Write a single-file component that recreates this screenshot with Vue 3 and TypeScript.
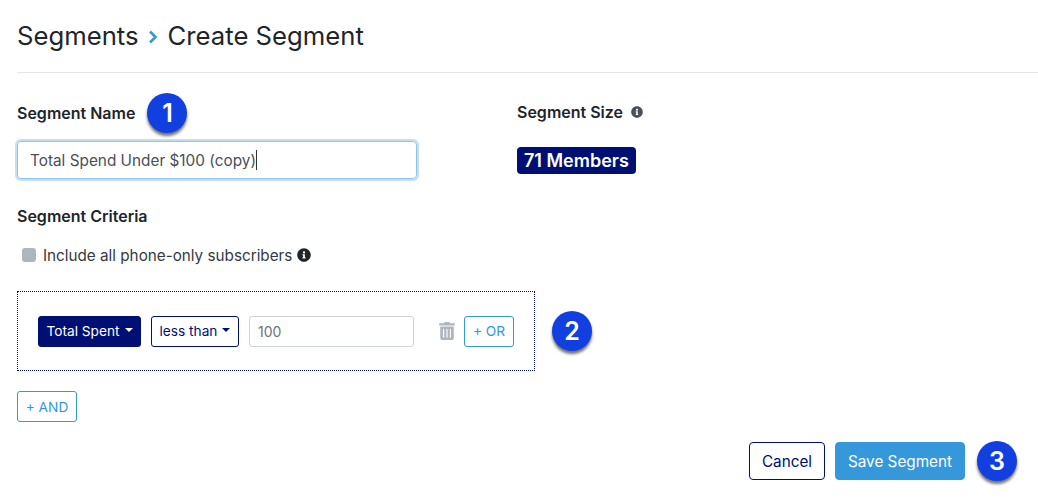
<script setup lang="ts">
const memberCount: number = 71
</script>

<template>
  <main class="page">
    <header class="title">
      <span>Segments</span>
      <svg class="chev" viewBox="0 0 10 14" width="10" height="14"><path d="M2 1.5 7.5 7 2 12.5" fill="none" stroke="#3498db" stroke-width="2.6"/></svg>
      <span>Create Segment</span>
    </header>

    <section class="top">
      <div class="name-col">
        <div class="label-row">
          <label class="label">Segment Name</label>
          <span class="step">1</span>
        </div>
        <div class="name-input">Total Spend Under $100 (copy)<i class="caret"></i></div>
      </div>
      <div class="size-col">
        <div class="size-label">
          <span class="label">Segment Size</span>
          <svg class="info small" viewBox="0 0 512 512"><path fill="currentColor" d="M256 8C119 8 8 119 8 256s111 248 248 248 248-111 248-248S393 8 256 8zm0 110c23 0 42 19 42 42s-19 42-42 42-42-19-42-42 19-42 42-42zm56 254c0 7-5 12-12 12h-88c-7 0-12-5-12-12v-24c0-7 5-12 12-12h12v-64h-12c-7 0-12-5-12-12v-24c0-7 5-12 12-12h64c7 0 12 5 12 12v100h12c7 0 12 5 12 12v24z"/></svg>
        </div>
        <span class="members">{{ memberCount }} Members</span>
      </div>
    </section>

    <h2 class="label criteria">Segment Criteria</h2>

    <div class="check-row">
      <span class="checkbox"></span>
      <span>Include all phone-only subscribers</span>
      <svg class="info" viewBox="0 0 512 512"><path fill="currentColor" d="M256 8C119 8 8 119 8 256s111 248 248 248 248-111 248-248S393 8 256 8zm0 110c23 0 42 19 42 42s-19 42-42 42-42-19-42-42 19-42 42-42zm56 254c0 7-5 12-12 12h-88c-7 0-12-5-12-12v-24c0-7 5-12 12-12h12v-64h-12c-7 0-12-5-12-12v-24c0-7 5-12 12-12h64c7 0 12 5 12 12v100h12c7 0 12 5 12 12v24z"/></svg>
    </div>

    <div class="rule-row">
      <div class="rule">
        <button class="btn solid">Total Spent<i class="tri"></i></button>
        <button class="btn outline">less than<i class="tri"></i></button>
        <div class="value">100</div>
        <svg class="trash" viewBox="0 0 448 512"><path fill="currentColor" d="M32 464a48 48 0 0 0 48 48h288a48 48 0 0 0 48-48V128H32zm272-256a16 16 0 0 1 32 0v224a16 16 0 0 1-32 0zm-96 0a16 16 0 0 1 32 0v224a16 16 0 0 1-32 0zm-96 0a16 16 0 0 1 32 0v224a16 16 0 0 1-32 0zM432 32H312l-9-19a24 24 0 0 0-22-13H167a24 24 0 0 0-21 13l-9 19H16A16 16 0 0 0 0 48v32a16 16 0 0 0 16 16h416a16 16 0 0 0 16-16V48a16 16 0 0 0-16-16z"/></svg>
        <button class="btn blue-line or">+ OR</button>
      </div>
      <span class="step">2</span>
    </div>

    <button class="btn blue-line and">+ AND</button>

    <footer class="actions">
      <button class="btn outline big cancel">Cancel</button>
      <button class="btn big save">Save Segment</button>
      <span class="step">3</span>
    </footer>
  </main>
</template>

<style>
html, body { margin: 0; background: #fff; }
</style>

<style scoped>
.page {
  width: 1038px;
  height: 500px;
  box-sizing: border-box;
  padding-left: 17px;
  overflow: hidden;
  font-family: Inter, "Noto Sans", sans-serif;
  color: #212529;
}
.title {
  height: 73px;
  box-sizing: border-box;
  border-bottom: 1px solid #e3e5e8;
  padding-top: 20px;
  display: flex;
  align-items: flex-start;
  gap: 9.5px;
  font-size: 25.7px;
  line-height: 31px;
}
.chev { margin-top: 10px; }
.top { display: flex; margin-top: 20px; }
.name-col { width: 500px; }
.label { font-size: 16px; font-weight: 600; line-height: 20px; margin: 0; color: #212529; }
.label-row { display: flex; align-items: center; gap: 12px; height: 40px; }
.step {
  width: 40px;
  height: 40px;
  flex: none;
  border-radius: 50%;
  background: #1240e0;
  color: #fff;
  font-size: 25px;
  font-weight: 600;
  display: flex;
  align-items: center;
  justify-content: center;
  box-shadow: 0 3px 3px rgba(0, 0, 0, 0.55);
}
.name-input {
  width: 400px;
  height: 38px;
  box-sizing: border-box;
  margin-top: 8px;
  padding-left: 12px;
  border: 1px solid #8fc4ea;
  border-radius: 4px;
  box-shadow: 0 0 0 2px #c2dff4;
  display: flex;
  align-items: center;
  font-size: 15.35px;
  color: #495057;
}
.caret { width: 1px; height: 20px; background: #333; }
.size-col { display: flex; flex-direction: column; align-items: flex-start; }
.size-label { display: flex; align-items: center; gap: 8px; height: 38px; }
.info { width: 14px; height: 14px; color: #212529; flex: none; }
.info.small { width: 12px; height: 12px; color: #495057; }
.members {
  margin-top: 16px;
  height: 27px;
  box-sizing: border-box;
  padding: 0 7px;
  border-radius: 4px;
  background: #000f73;
  color: #fff;
  font-size: 18px;
  font-weight: 600;
  line-height: 27px;
}
.criteria { margin-top: 27px; }
.check-row {
  display: flex;
  align-items: center;
  height: 20px;
  margin-top: 19px;
  margin-left: 5px;
  font-size: 15.25px;
  color: #343a40;
}
.checkbox {
  width: 14px;
  height: 14px;
  border-radius: 3px;
  background: #adb5bd;
  margin-right: 7px;
}
.check-row .info { margin-left: 5px; }
.rule-row { display: flex; align-items: center; margin-top: 26px; gap: 17px; }
.rule {
  width: 518px;
  height: 80px;
  box-sizing: border-box;
  border: 1px dotted #000f73;
  padding-left: 20px;
  display: flex;
  align-items: center;
}
.btn {
  font-family: inherit;
  font-size: 13.7px;
  height: 31px;
  box-sizing: border-box;
  border-radius: 3px;
  padding: 0;
  background: #fff;
  display: inline-flex;
  align-items: center;
  justify-content: center;
}
.solid { width: 103px; background: #000f73; color: #fff; border: 1px solid #000f73; }
.outline { width: 88px; margin-left: 10px; color: #000f73; border: 1px solid #000f73; }
.tri {
  width: 0;
  height: 0;
  margin-left: 5px;
  margin-top: -2px;
  border-left: 4px solid transparent;
  border-right: 4px solid transparent;
  border-top: 4px solid currentColor;
}
.value {
  width: 165px;
  height: 31px;
  box-sizing: border-box;
  margin-left: 10px;
  padding-left: 8px;
  border: 1px solid #ced4da;
  border-radius: 3px;
  font-size: 14px;
  line-height: 29px;
  color: #6c757d;
}
.trash { width: 16px; height: 18px; margin-left: 25px; color: #adb5bd; }
.blue-line { color: #3498db; border: 1px solid #3498db; }
.or { width: 50px; margin-left: 9px; }
.and { width: 60px; display: flex; margin-top: 20px; }
.actions {
  display: flex;
  align-items: center;
  justify-content: flex-end;
  margin: 20px 21px 0 0;
  gap: 10px;
  height: 38px;
}
.big { height: 38px; font-size: 15.3px; border-radius: 4px; }
.cancel { width: 76px; margin-left: 0; }
.save { width: 130px; background: #3498db; color: #fff; border: 1px solid #3498db; }
.actions .step { margin-left: 2px; }
</style>
